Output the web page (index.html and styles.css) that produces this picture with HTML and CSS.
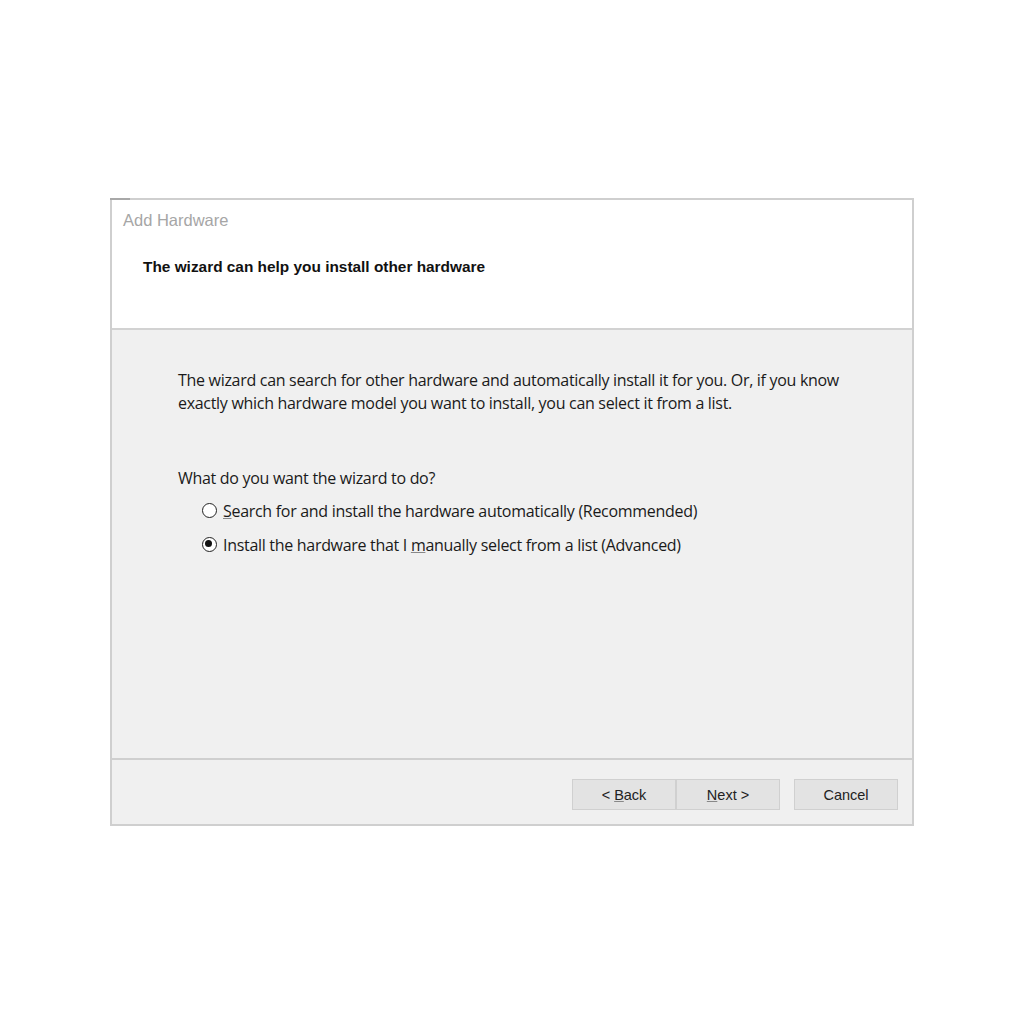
FILE: index.html
```html
<!DOCTYPE html>
<html lang="en">
<head>
    <meta charset="UTF-8">
    <title>Add Hardware</title>
    <link rel="stylesheet" href="styles.css">
</head>
<body>
    <div class="dialog">
        <div class="header">
            <div class="title">Add Hardware</div>
            <h1>The wizard can help you install other hardware</h1>
        </div>
        <div class="content">
            <p class="intro">The wizard can search for other hardware and automatically install it for you. Or, if you know exactly which hardware model you want to install, you can select it from a list.</p>
            <p class="question">What do you want the wizard to do?</p>
            <label class="option">
                <span class="radio"></span>
                <span><u>S</u>earch for and install the hardware automatically (Recommended)</span>
            </label>
            <label class="option">
                <span class="radio checked"></span>
                <span>Install the hardware that I <u>m</u>anually select from a list (Advanced)</span>
            </label>
        </div>
        <div class="footer">
            <button class="btn">&lt; <u>B</u>ack</button>
            <button class="btn"><u>N</u>ext &gt;</button>
            <button class="btn cancel">Cancel</button>
        </div>
    </div>
</body>
</html>
```

FILE: styles.css
```css
body {
    margin: 0;
    background-color: #fff;
    font-family: "Open Sans", "Noto Sans", sans-serif;
    color: #1a1a1a;
}

.dialog {
    width: 800px;
    margin: 198px 0 0 110px;
    border: 2px solid #cfcfcf;
    background-color: #f0f0f0;
    position: relative;
}

/* darker tick at the top-left corner of the frame */
.dialog::before {
    content: "";
    position: absolute;
    left: -2px;
    top: -2px;
    width: 20px;
    height: 2px;
    background-color: #a8a8a8;
}

.header {
    height: 128px;
    background-color: #fff;
    border-bottom: 2px solid #d2d2d2;
}

.title {
    font-family: "Liberation Sans", Arial, sans-serif;
    font-size: 16.5px;
    color: #a6a6a6;
    padding: 11px 0 0 11px;
}

h1 {
    font-family: "Liberation Sans", Arial, sans-serif;
    font-size: 15.4px;
    font-weight: bold;
    color: #111;
    margin: 28px 0 0 31px;
}

.content {
    height: 428px;
    padding: 0 0 0 66px;
    border-bottom: 2px solid #cfcfcf;
}

.intro {
    font-size: 16px;
    line-height: 23px;
    margin: 0;
    padding-top: 39px;
    width: 690px;
    letter-spacing: -0.3px;
}

.question {
    font-size: 16px;
    margin: 52px 0 10px;
    letter-spacing: -0.3px;
}

.option {
    display: flex;
    align-items: center;
    gap: 6px;
    margin: 0 0 11px 24px;
    font-size: 16px;
    height: 23px;
    letter-spacing: -0.3px;
}

.option u {
    text-decoration-color: #888;
}

.radio {
    width: 15px;
    height: 15px;
    border: 1.6px solid #222;
    border-radius: 50%;
    background-color: #fff;
    box-sizing: border-box;
    position: relative;
}

.radio.checked::after {
    content: "";
    position: absolute;
    left: 2.4px;
    top: 2.4px;
    width: 7px;
    height: 7px;
    border-radius: 50%;
    background-color: #111;
}

.footer {
    display: flex;
    justify-content: flex-end;
    padding: 19px 14px 14px 0;
}

.btn {
    width: 104px;
    height: 31px;
    background-color: #e3e3e3;
    border: 1px solid #d0d0d0;
    font-family: "Liberation Sans", Arial, sans-serif;
    font-size: 14.5px;
    color: #222;
    padding: 0;
}

.btn u {
    text-decoration-color: #888;
}

.cancel {
    margin-left: 14px;
}
```
